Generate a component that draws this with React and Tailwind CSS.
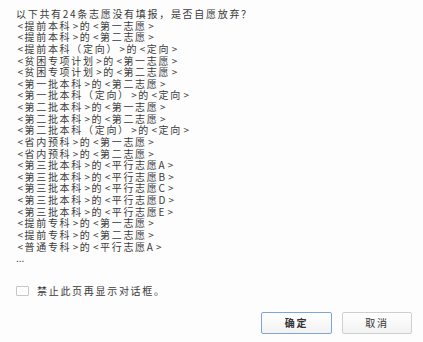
import React from "react";

const lines = [
  "<提前本科>的<第一志愿>",
  "<提前本科>的<第二志愿>",
  "<提前本科（定向）>的<定向>",
  "<贫困专项计划>的<第一志愿>",
  "<贫困专项计划>的<第二志愿>",
  "<第一批本科>的<第二志愿>",
  "<第一批本科（定向）>的<定向>",
  "<第二批本科>的<第一志愿>",
  "<第二批本科>的<第二志愿>",
  "<第二批本科（定向）>的<定向>",
  "<省内预科>的<第一志愿>",
  "<省内预科>的<第二志愿>",
  "<第三批本科>的<平行志愿A>",
  "<第三批本科>的<平行志愿B>",
  "<第三批本科>的<平行志愿C>",
  "<第三批本科>的<平行志愿D>",
  "<第三批本科>的<平行志愿E>",
  "<提前专科>的<第一志愿>",
  "<提前专科>的<第二志愿>",
  "<普通专科>的<平行志愿A>",
];

// brackets are drawn in a fixed-width cell so their spacing matches
const renderLine = (line) =>
  line.split(/([<>])/).map((part, i) =>
    part === "<" || part === ">" ? (
      <span key={i} className="inline-block w-[8.5px] text-center tracking-normal">
        {part}
      </span>
    ) : (
      <span key={i}>{part}</span>
    )
  );

export default function App() {
  return (
    <div
      className="w-[423px] h-[342px] bg-[#fdfdfd] text-[#3a3a3a] flex flex-col overflow-hidden"
      style={{ fontFamily: '"Noto Sans CJK SC", "Liberation Sans", sans-serif' }}
    >
      <div className="pl-4 pt-[8px] text-[10px] leading-[11.63px] tracking-[1.7px]">
        <p>以下共有24条志愿没有填报，是否自愿放弃？</p>
        {lines.map((line, i) => (
          <p key={i} className="whitespace-nowrap">
            {renderLine(line)}
          </p>
        ))}
        <p className="tracking-normal">...</p>
      </div>

      <label className="flex items-center gap-[8px] pl-4 mt-[21px] h-[12px] text-[10px] leading-[12px] tracking-[1.7px]">
        <span className="w-[13px] h-[10px] border border-[#c8c8c8] bg-white rounded-[1px]"></span>
        <span>禁止此页再显示对话框。</span>
      </label>

      <div className="flex justify-end gap-[10px] pr-[11px] mt-[15px]">
        <button className="w-[71px] h-[22px] border border-[#7aa6da] rounded-[2px] bg-gradient-to-b from-white to-[#f2f2f2] text-[10px] font-bold tracking-[1.7px] text-[#333]">
          确定
        </button>
        <button className="w-[70px] h-[22px] border border-[#cfcfcf] rounded-[2px] bg-gradient-to-b from-white to-[#f2f2f2] text-[10px] tracking-[1.7px] text-[#333]">
          取消
        </button>
      </div>
    </div>
  );
}
